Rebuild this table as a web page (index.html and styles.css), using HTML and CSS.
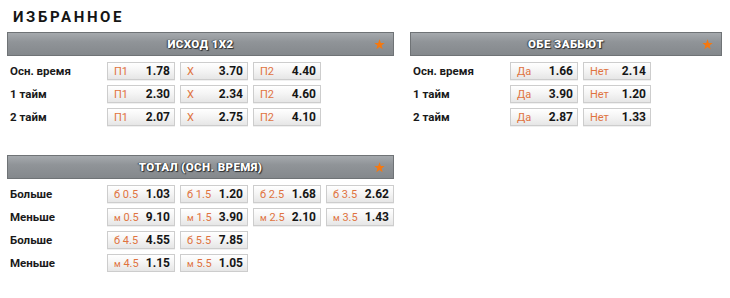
FILE: index.html
```html
<!DOCTYPE html>
<html lang="ru">
<head>
<meta charset="utf-8">
<link rel="stylesheet" href="styles.css">
</head>
<body>
<div class="page">
  <h1 class="title">ИЗБРАННОЕ</h1>
  <div class="grid">
    <section class="panel">
      <div class="head"><span>ИСХОД 1Х2</span><svg class="star" viewBox="0 0 10 10"><path d="M5 0.3 L6.2 3.6 L9.7 3.7 L6.9 5.9 L7.9 9.3 L5 7.3 L2.1 9.3 L3.1 5.9 L0.3 3.7 L3.8 3.6 Z"/></svg></div>
      <div class="body">
        <div class="row"><span class="lbl">Осн. время</span><span class="odd"><i>П1</i><b>1.78</b></span><span class="odd"><i>Х</i><b>3.70</b></span><span class="odd"><i>П2</i><b>4.40</b></span></div>
        <div class="row"><span class="lbl">1 тайм</span><span class="odd"><i>П1</i><b>2.30</b></span><span class="odd"><i>Х</i><b>2.34</b></span><span class="odd"><i>П2</i><b>4.60</b></span></div>
        <div class="row"><span class="lbl">2 тайм</span><span class="odd"><i>П1</i><b>2.07</b></span><span class="odd"><i>Х</i><b>2.75</b></span><span class="odd"><i>П2</i><b>4.10</b></span></div>
      </div>
    </section>
    <section class="panel">
      <div class="head"><span>ОБЕ ЗАБЬЮТ</span><svg class="star" viewBox="0 0 10 10"><path d="M5 0.3 L6.2 3.6 L9.7 3.7 L6.9 5.9 L7.9 9.3 L5 7.3 L2.1 9.3 L3.1 5.9 L0.3 3.7 L3.8 3.6 Z"/></svg></div>
      <div class="body">
        <div class="row"><span class="lbl">Осн. время</span><span class="odd"><i>Да</i><b>1.66</b></span><span class="odd"><i>Нет</i><b>2.14</b></span></div>
        <div class="row"><span class="lbl">1 тайм</span><span class="odd"><i>Да</i><b>3.90</b></span><span class="odd"><i>Нет</i><b>1.20</b></span></div>
        <div class="row"><span class="lbl">2 тайм</span><span class="odd"><i>Да</i><b>2.87</b></span><span class="odd"><i>Нет</i><b>1.33</b></span></div>
      </div>
    </section>
    <section class="panel total">
      <div class="head"><span>ТОТАЛ (ОСН. ВРЕМЯ)</span><svg class="star" viewBox="0 0 10 10"><path d="M5 0.3 L6.2 3.6 L9.7 3.7 L6.9 5.9 L7.9 9.3 L5 7.3 L2.1 9.3 L3.1 5.9 L0.3 3.7 L3.8 3.6 Z"/></svg></div>
      <div class="body">
        <div class="row"><span class="lbl">Больше</span><span class="odd"><i>б 0.5</i><b>1.03</b></span><span class="odd"><i>б 1.5</i><b>1.20</b></span><span class="odd"><i>б 2.5</i><b>1.68</b></span><span class="odd"><i>б 3.5</i><b>2.62</b></span></div>
        <div class="row"><span class="lbl">Меньше</span><span class="odd"><i><small>м</small> 0.5</i><b>9.10</b></span><span class="odd"><i><small>м</small> 1.5</i><b>3.90</b></span><span class="odd"><i><small>м</small> 2.5</i><b>2.10</b></span><span class="odd"><i><small>м</small> 3.5</i><b>1.43</b></span></div>
        <div class="row"><span class="lbl">Больше</span><span class="odd"><i>б 4.5</i><b>4.55</b></span><span class="odd"><i>б 5.5</i><b>7.85</b></span></div>
        <div class="row"><span class="lbl">Меньше</span><span class="odd"><i><small>м</small> 4.5</i><b>1.15</b></span><span class="odd"><i><small>м</small> 5.5</i><b>1.05</b></span></div>
      </div>
    </section>
  </div>
</div>
</body>
</html>
```
FILE: styles.css
```css
* { box-sizing: border-box; }
body {
  margin: 0;
  background: #fff;
  font-family: Roboto, "Liberation Sans", Arial, sans-serif;
  color: #1a1a1a;
}
.page {
  padding: 0 8px 0 7px;
}
.title {
  margin: 0;
  padding: 8px 0 0 6px;
  height: 32px;
  font-size: 15px;
  line-height: 18px;
  font-weight: 700;
  letter-spacing: 2.6px;
  color: #151515;
}
.grid {
  display: grid;
  grid-template-columns: 387px 312px;
  column-gap: 16px;
  align-items: start;
}
.total {
  grid-column: 1;
  margin-top: 29px;
}
.head {
  position: relative;
  height: 24px;
  border: 1px solid #6f7376;
  background: linear-gradient(#a5a9ad, #909498 40%, #84888c);
  display: flex;
  align-items: center;
  justify-content: center;
}
.head span {
  color: #fff;
  font-size: 11.5px;
  font-weight: 900;
  letter-spacing: 0.4px;
  text-shadow: 0 0 1px #2a2c2e, 1px 1px 1px #2a2c2e, -1px 0 1px #4a4d50;
}
.star {
  position: absolute;
  right: 8px;
  top: 6px;
  width: 11px;
  height: 11px;
  fill: #f5780f;
}
.body {
  padding-top: 6px;
  display: flex;
  flex-direction: column;
  gap: 5px;
}
.row {
  display: flex;
  align-items: center;
  gap: 5px;
  height: 18px;
}
.lbl {
  width: 95px;
  padding-left: 3px;
  font-size: 11.5px;
  font-weight: 700;
  color: #1a1a1a;
}
.odd {
  width: 68px;
  height: 18px;
  display: flex;
  align-items: center;
  justify-content: space-between;
  padding: 0 4px 0 6px;
  border: 1px solid #cdcdcd;
  background: linear-gradient(#ffffff, #f4f4f4 50%, #e6e6e6);
  box-shadow: 0 1px 0 rgba(0,0,0,0.06);
}
.odd i {
  font-style: normal;
  font-size: 11px;
  color: #e0733f;
}
.odd i small {
  font-size: 9px;
}
.odd b {
  font-size: 12px;
  font-weight: 700;
  color: #161616;
}
```
